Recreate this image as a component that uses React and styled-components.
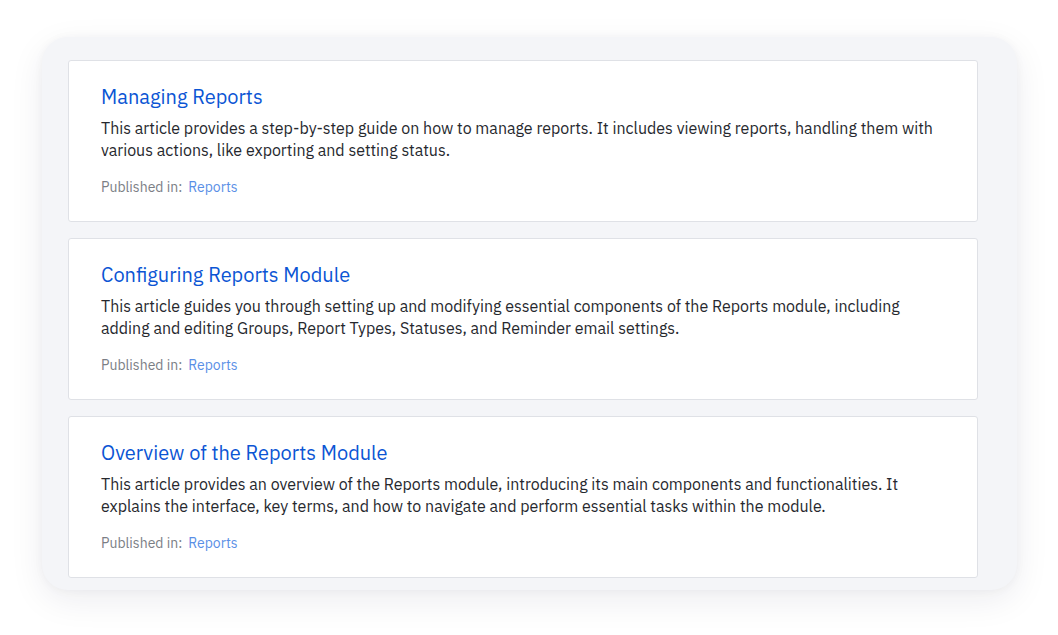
import React from "react";
import styled, { createGlobalStyle } from "styled-components";

const Global = createGlobalStyle`
  html, body { margin: 0; padding: 0; background: #ffffff; }
  body { font-family: "IBM Plex Sans", Inter, "Noto Sans", sans-serif; }
`;

const Page = styled.div`
  width: 1058px;
  height: 635px;
  box-sizing: border-box;
  padding: 37px 41px 0 42px;
  overflow: hidden;
`;

const Panel = styled.div`
  width: 975px;
  height: 553px;
  box-sizing: border-box;
  background: #f4f5f8;
  border-radius: 26px;
  box-shadow: 0 10px 34px rgba(20, 30, 60, 0.08), 0 1px 10px rgba(20, 30, 60, 0.04);
  padding: 23px 39px 0 26px;
  display: flex;
  flex-direction: column;
  gap: 16px;
  overflow: hidden;
`;

const Card = styled.article`
  height: 162px;
  box-sizing: border-box;
  background: #ffffff;
  border: 1px solid #dfe1e6;
  border-radius: 3px;
  padding: 24px 32px 0 32px;
  display: flex;
  flex-direction: column;
  flex-shrink: 0;
`;

const Title = styled.a`
  font-size: 20px;
  line-height: 24px;
  color: #0b55d4;
  text-decoration: none;
  margin-bottom: 8px;
`;

const Desc = styled.p`
  margin: 0;
  font-size: 16px;
  line-height: 22px;
  color: #26282e;
`;

const Meta = styled.div`
  margin-top: 16px;
  font-size: 14px;
  line-height: 20px;
  color: #7b7e85;
  display: flex;
  gap: 6px;
`;

const MetaLink = styled.a`
  color: #5a8fe6;
  text-decoration: none;
`;

const articles = [
  {
    title: "Managing Reports",
    desc: "This article provides a step-by-step guide on how to manage reports. It includes viewing reports, handling them with various actions, like exporting and setting status.",
  },
  {
    title: "Configuring Reports Module",
    desc: "This article guides you through setting up and modifying essential components of the Reports module, including adding and editing Groups, Report Types, Statuses, and Reminder email settings.",
  },
  {
    title: "Overview of the Reports Module",
    desc: "This article provides an overview of the Reports module, introducing its main components and functionalities. It explains the interface, key terms, and how to navigate and perform essential tasks within the module.",
  },
];

export default function App() {
  return (
    <>
      <Global />
      <Page>
        <Panel>
          {articles.map((a) => (
            <Card key={a.title}>
              <Title href="#">{a.title}</Title>
              <Desc>{a.desc}</Desc>
              <Meta>
                <span>Published in:</span>
                <MetaLink href="#">Reports</MetaLink>
              </Meta>
            </Card>
          ))}
        </Panel>
      </Page>
    </>
  );
}
